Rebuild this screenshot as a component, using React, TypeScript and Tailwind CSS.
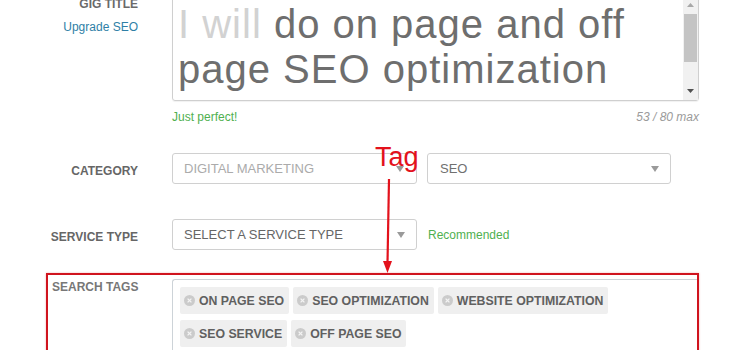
import React from "react";

const Caret = ({ className = "" }: { className?: string }) => (
  <svg width="8" height="6" viewBox="0 0 8 6" className={className}>
    <polygon points="0,0 8,0 4,6" fill="#9a9a9a" />
  </svg>
);

const XCircle = () => (
  <svg width="11" height="11" viewBox="0 0 11 11" className="shrink-0">
    <circle cx="5.5" cy="5.5" r="5.5" fill="#cbcbcb" />
    <path d="M3.6 3.6 L7.4 7.4 M7.4 3.6 L3.6 7.4" stroke="#f4f4f4" strokeWidth="1.3" />
  </svg>
);

const Chip = ({ label }: { label: string }) => (
  <div className="flex h-[27px] items-center gap-[4px] rounded-[2px] bg-[#efefef] pl-[4px] pr-[5px]">
    <XCircle />
    <span className="text-[12.3px] font-bold leading-[14px] text-[#606060]">{label}</span>
  </div>
);

export default function App() {
  return (
    <div
      className="relative h-[350px] w-[750px] overflow-hidden bg-white"
      style={{ fontFamily: '"Liberation Sans", Arial, sans-serif' }}
    >
      {/* GIG TITLE row */}
      <div className="mt-[-6px] flex">
        <div className="flex w-[172px] shrink-0 flex-col items-end pr-[34px] pt-[3px]">
          <div className="text-[12px] font-bold leading-[14px] text-[#6a6a6a]">GIG TITLE</div>
          <div className="mt-[9px] text-[12px] leading-[14px] text-[#2f7fa6]">Upgrade SEO</div>
        </div>
        <div className="flex w-[527px] flex-col">
          <div className="flex h-[107px] rounded-[3px] border border-[#cfcfcf] shadow-[0_1px_1px_rgba(0,0,0,0.06)]">
            <div className="flex-1 whitespace-nowrap pl-[5px] pt-[7px] text-[40px] leading-[45px] tracking-[1px] text-[#6e6e6e]">
              <div>
                <span className="text-[#d2d2d2]">I will</span> do on page and off
              </div>
              <div>page SEO optimization</div>
            </div>
            <div className="flex w-[15px] flex-col bg-[#f1f1f1]">
              <div className="flex h-[19px] items-center justify-center">
                <svg width="7" height="4" viewBox="0 0 7 4">
                  <polygon points="0,4 7,4 3.5,0" fill="#a8a8a8" />
                </svg>
              </div>
              <div className="mx-[1px] h-[48px] bg-[#c4c4c4]" />
              <div className="flex-1" />
              <div className="flex h-[18px] items-center justify-center">
                <svg width="7" height="4" viewBox="0 0 7 4">
                  <polygon points="0,0 7,0 3.5,4" fill="#505050" />
                </svg>
              </div>
            </div>
          </div>
          <div className="mt-[9px] flex items-center justify-between">
            <span className="text-[12px] leading-[14px] text-[#4fb04f]">Just perfect!</span>
            <span className="text-[12px] italic leading-[14px] text-[#9a9a9a]">53 / 80 max</span>
          </div>
        </div>
      </div>

      {/* CATEGORY row */}
      <div className="mt-[29px] flex items-center">
        <div className="w-[172px] shrink-0 pr-[34px] pt-[4px] text-right text-[12px] font-bold leading-[14px] text-[#666]">
          CATEGORY
        </div>
        <div className="flex gap-[10px]">
          <div className="flex h-[31px] w-[245px] items-center justify-between rounded-[3px] border border-[#d0d0d0] pl-[11px] pr-[12px]">
            <span className="text-[13px] leading-[15px] text-[#ababab]">DIGITAL MARKETING</span>
            <Caret />
          </div>
          <div className="flex h-[31px] w-[244px] items-center justify-between rounded-[3px] border border-[#d0d0d0] pl-[12px] pr-[11px]">
            <span className="text-[13px] leading-[15px] text-[#707070]">SEO</span>
            <Caret />
          </div>
        </div>
      </div>

      {/* SERVICE TYPE row */}
      <div className="mt-[35px] flex items-center">
        <div className="w-[172px] shrink-0 pr-[34px] pt-[4px] text-right text-[12px] font-bold leading-[14px] text-[#666]">
          SERVICE TYPE
        </div>
        <div className="flex h-[31px] w-[245px] items-center justify-between rounded-[3px] border border-[#d0d0d0] pl-[11px] pr-[11px]">
          <span className="text-[13px] leading-[15px] text-[#666]">SELECT A SERVICE TYPE</span>
          <Caret />
        </div>
        <span className="ml-[11px] text-[12px] leading-[14px] text-[#4fb04f]">Recommended</span>
      </div>

      {/* SEARCH TAGS row (highlighted) */}
      <div className="ml-[46px] mt-[23px] flex h-[90px] w-[653px] border-2 border-[#d0141e] shadow-[0_0_2px_rgba(220,40,50,0.35)]">
        <div className="w-[124px] shrink-0 pl-[4px] pt-[5px] text-[12px] font-bold leading-[14px] text-[#777]">
          SEARCH TAGS
        </div>
        <div className="mt-[4px] flex-1 rounded-tl-[3px] border-l border-t border-[#cdd3d8] pl-[7px] pt-[7px]">
          <div className="flex flex-wrap gap-x-[4px] gap-y-[6px]">
            <Chip label="ON PAGE SEO" />
            <Chip label="SEO OPTIMIZATION" />
            <Chip label="WEBSITE OPTIMIZATION" />
            <Chip label="SEO SERVICE" />
            <Chip label="OFF PAGE SEO" />
          </div>
        </div>
      </div>

      {/* Annotation overlay */}
      <div className="pointer-events-none absolute left-[375px] top-[144px] text-[27px] leading-[27px] text-[#e3121c]">
        Tag
      </div>
      <svg className="pointer-events-none absolute left-0 top-0" width="750" height="350">
        <line x1="389" y1="179" x2="387.5" y2="263" stroke="#e3121c" strokeWidth="2.2" />
        <polygon points="383,261 392,261 387.5,273" fill="#e3121c" />
      </svg>
    </div>
  );
}
